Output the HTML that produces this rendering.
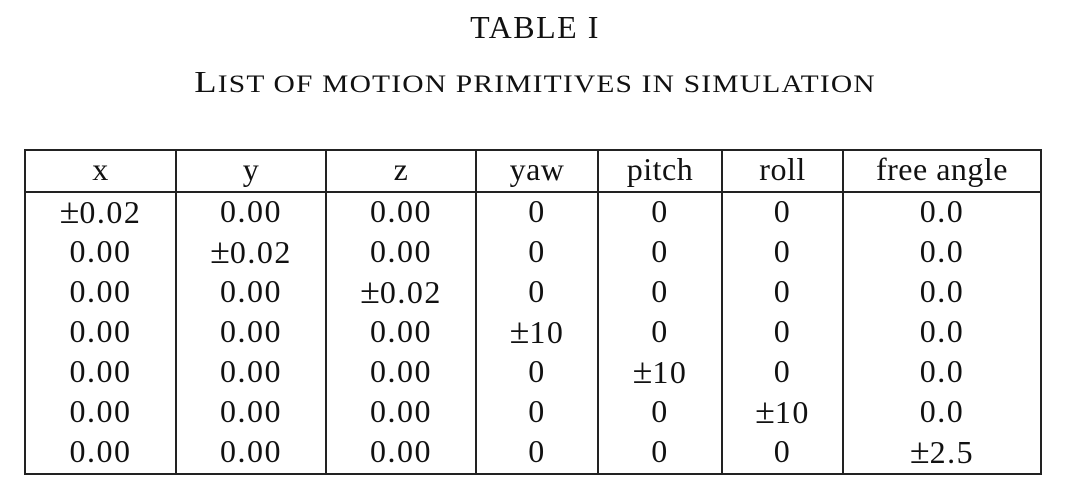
<!DOCTYPE html>
<html><head><style>
body{margin:0;background:#fff;width:1070px;height:496px;overflow:hidden;font-family:"Liberation Serif",serif;color:#111}
.t1{position:absolute;top:9px;left:0;width:1070px;text-align:center;font-size:32px;letter-spacing:1.5px}
.t2{position:absolute;top:64px;left:0;width:1070px;text-align:center;font-variant:small-caps;font-size:25px;letter-spacing:1px;transform:scaleX(1.18)}
.t2 .b{font-size:31px}
table{position:absolute;left:24px;top:149px;border-collapse:collapse;font-size:32px;letter-spacing:1.5px}
td{border-left:2px solid #222;border-right:2px solid #222;text-align:center;height:40px;padding:0;line-height:36px;vertical-align:top}
tr.h td{border-top:2px solid #222;border-bottom:2px solid #222;height:40px;letter-spacing:0.5px}
tr.last td{border-bottom:2px solid #222}
.pm{font-size:36px;letter-spacing:0}
</style></head><body>
<div class="t1">TABLE I</div>
<div class="t2"><span class="b">L</span>IST OF MOTION PRIMITIVES IN SIMULATION</div>
<table>
<colgroup><col style="width:151px"><col style="width:150px"><col style="width:150px"><col style="width:122px"><col style="width:124px"><col style="width:121px"><col style="width:198px"></colgroup>
<tr class="h"><td>x</td><td>y</td><td>z</td><td>yaw</td><td>pitch</td><td>roll</td><td>free angle</td></tr>
<tr><td><span class="pm">±</span>0.02</td><td>0.00</td><td>0.00</td><td>0</td><td>0</td><td>0</td><td>0.0</td></tr>
<tr><td>0.00</td><td><span class="pm">±</span>0.02</td><td>0.00</td><td>0</td><td>0</td><td>0</td><td>0.0</td></tr>
<tr><td>0.00</td><td>0.00</td><td><span class="pm">±</span>0.02</td><td>0</td><td>0</td><td>0</td><td>0.0</td></tr>
<tr><td>0.00</td><td>0.00</td><td>0.00</td><td><span class="pm">±</span>10</td><td>0</td><td>0</td><td>0.0</td></tr>
<tr><td>0.00</td><td>0.00</td><td>0.00</td><td>0</td><td><span class="pm">±</span>10</td><td>0</td><td>0.0</td></tr>
<tr><td>0.00</td><td>0.00</td><td>0.00</td><td>0</td><td>0</td><td><span class="pm">±</span>10</td><td>0.0</td></tr>
<tr class="last"><td>0.00</td><td>0.00</td><td>0.00</td><td>0</td><td>0</td><td>0</td><td><span class="pm">±</span>2.5</td></tr>
</table>
</body></html>
